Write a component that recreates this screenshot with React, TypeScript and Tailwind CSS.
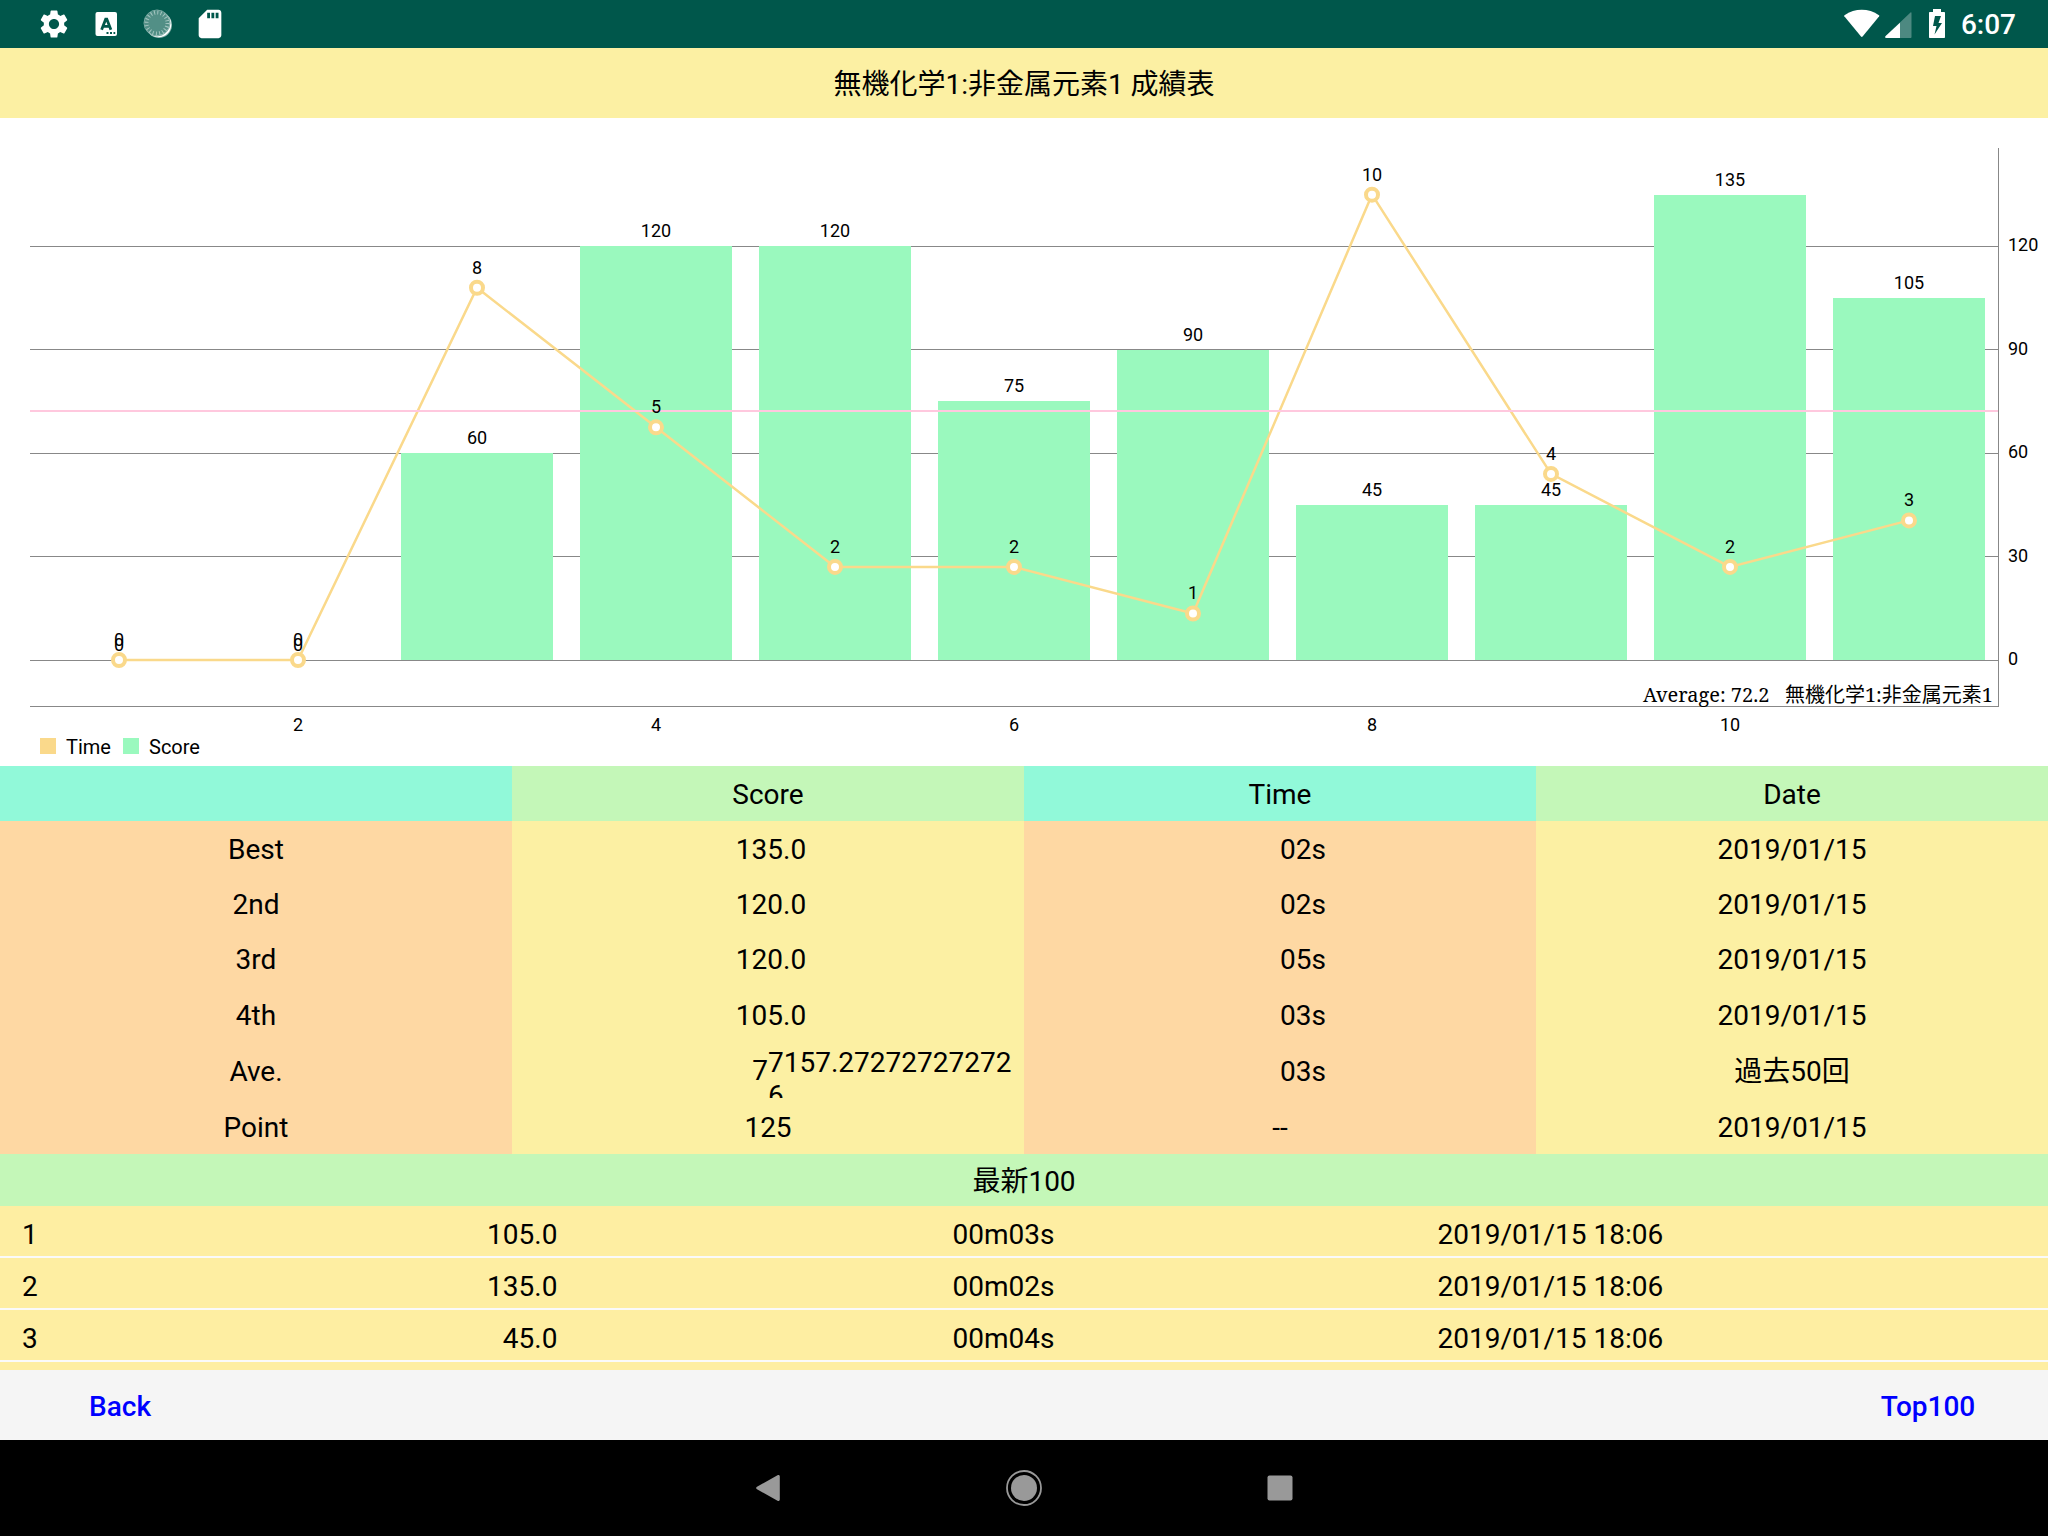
import { MdSdCard, MdSettings } from "react-icons/md";

const attempts = [
  { score: 0, time: 0 },
  { score: 0, time: 0 },
  { score: 60, time: 8 },
  { score: 120, time: 5 },
  { score: 120, time: 2 },
  { score: 75, time: 2 },
  { score: 90, time: 1 },
  { score: 45, time: 10 },
  { score: 45, time: 4 },
  { score: 135, time: 2 },
  { score: 105, time: 3 },
];

const ranking = [
  { label: "Best", score: "135.0", time: "02s", date: "2019/01/15", height: "h-[55px]" },
  { label: "2nd", score: "120.0", time: "02s", date: "2019/01/15", height: "h-[55px]" },
  { label: "3rd", score: "120.0", time: "05s", date: "2019/01/15", height: "h-[55px]" },
  { label: "4th", score: "105.0", time: "03s", date: "2019/01/15", height: "h-14" },
];

const latest = [
  { rank: 1, score: "105.0", time: "00m03s", date: "2019/01/15 18:06" },
  { rank: 2, score: "135.0", time: "00m02s", date: "2019/01/15 18:06" },
  { rank: 3, score: "45.0", time: "00m04s", date: "2019/01/15 18:06" },
];

function StatusBar() {
  return (
    <div className="flex h-12 shrink-0 items-center justify-between bg-[#00574b] pr-8 pl-9 text-white">
      <div className="flex items-center gap-4">
        <span className="flex w-9 justify-center">
          <MdSettings size={34} />
        </span>
        <svg width="36" height="36" viewBox="0 0 36 36" fill="none">
          <rect x="7.500" y="6" width="21.500" height="24" rx="2" fill="#fff" />
          <path d="M13.600 23.800 17.700 13.200h1.100L22.900 23.800M15 20.400h6.500" stroke="#00574b" strokeWidth="2.800" />
          <path d="M18.500 26h2v2h-2zM22 26h2v2h-2zM25.500 26h1.700v2h-1.700z" fill="#00574b" />
        </svg>
        <svg width="36" height="36" viewBox="0 0 36 36" fill="none">
          <circle cx="19" cy="19" r="13" fill="#fff" fillOpacity="0.5" />
          <circle cx="18.500" cy="18.500" r="12.800" fill="#fff" />
          <circle cx="17" cy="17" r="12.500" fill="#528f86" />
          <circle cx="17" cy="17" r="13" fill="none" stroke="#7aaaa3" strokeWidth="1" />
          <circle cx="17" cy="17" r="10.500" stroke="#a5c6c1" strokeWidth="4" strokeDasharray="1 2.300" />
        </svg>
        <span className="flex w-9 justify-center">
          <MdSdCard size={34} />
        </span>
      </div>
      <div className="flex items-center">
        <svg width="102" height="32" viewBox="0 0 102 32" fill="#fff">
          <path d="M0.500 7.200C11 0 24.500 0 35 7.200c.4.300.5.700.2 1.100L18.600 28.500c-.5.600-1.100.6-1.600 0L.3 8.300C0 7.900.1 7.500.5 7.200z" />
          <path d="M66.500 4.500C67 4 67.500 4.200 67.500 5v24c0 .6-.4 1-1 1H42.500c-1.500 0-1.800-1-.8-2z" fillOpacity="0.3" />
          <path d="M56 14.800V30H42.500c-1.500 0-1.800-1-.8-2z" />
          <path
            fillRule="evenodd"
            d="M89 1h8v3h3c.6 0 1 .4 1 1v24c0 .6-.4 1-1 1H86c-.6 0-1-.4-1-1V5c0-.6.4-1 1-1h3zM91 8 89 18h3.500L90.500 26.500 98 15h-3.500L97 8z"
          />
        </svg>
        <span className="ml-[15px] pt-px text-[28px] leading-8 font-medium">6:07</span>
      </div>
    </div>
  );
}

const LEFT = 30;
const RIGHT = 1998;
const BASE = 542;
const step = 179;
const xAt = (n: number) => LEFT + (n - 0.5) * step - 0.5;
const scoreY = (score: number) => BASE - score * 3.447;
const timeY = (time: number) => BASE - time * 46.53;
const average = 72.2;

function ScoreChart() {
  return (
    <svg viewBox="0 0 2048 648" className="block h-auto w-full shrink-0 bg-white" role="img" aria-label="Time and Score">
      <g stroke="#888" strokeWidth="1" shapeRendering="crispEdges">
        {[0, 30, 60, 90, 120].map((v) => (
          <line key={v} x1={LEFT} x2={RIGHT} y1={Math.floor(scoreY(v)) + 0.5} y2={Math.floor(scoreY(v)) + 0.5} />
        ))}
        <line x1={LEFT} x2={RIGHT + 1} y1="588.5" y2="588.5" />
        <line x1="1998.5" x2="1998.5" y1="30" y2="589" />
      </g>
      <g fill="#9af9be" shapeRendering="crispEdges">
        {attempts.map((a, i) => (
          <rect
            key={i}
            x={Math.round(xAt(i + 1) - step * 0.425)}
            width={Math.round(step * 0.85)}
            y={Math.round(scoreY(a.score))}
            height={BASE - Math.round(scoreY(a.score))}
          />
        ))}
      </g>
      <polyline
        points={attempts.map((a, i) => `${xAt(i + 1)},${timeY(a.time)}`).join(" ")}
        fill="none"
        stroke="#fad98b"
        strokeWidth="2.500"
      />
      <g fill="#fff" stroke="#fad98b" strokeWidth="4">
        {attempts.map((a, i) => (
          <circle key={i} cx={xAt(i + 1)} cy={timeY(a.time)} r="6" />
        ))}
      </g>
      <line
        x1={LEFT}
        x2={RIGHT}
        y1={Math.round(scoreY(average))}
        y2={Math.round(scoreY(average))}
        stroke="#ffc8de"
        strokeWidth="2"
        shapeRendering="crispEdges"
      />
      <g className="text-[18px]" textAnchor="middle">
        {attempts.map((a, i) => (
          <g key={i}>
            <text x={xAt(i + 1)} y={Math.round(timeY(a.time)) - 14}>{a.time}</text>
            <text x={xAt(i + 1)} y={Math.round(scoreY(a.score)) - 9}>{a.score}</text>
          </g>
        ))}
        {[2, 4, 6, 8, 10].map((n) => (
          <text key={n} x={xAt(n)} y="613">{n}</text>
        ))}
      </g>
      <g className="text-[18px]">
        {[0, 30, 60, 90, 120].map((v) => (
          <text key={v} x="2008" y={Math.round(scoreY(v)) + 5}>{v}</text>
        ))}
      </g>
      <g className="font-['Noto_Serif','Liberation_Serif','Noto_Sans_CJK_JP',serif] text-[20px]">
        <text x="1643" y="584">Average: {average}</text>
        <text x="1993" y="584" textAnchor="end">無機化学1:非金属元素1</text>
      </g>
      <g className="text-[20px]">
        <rect x="40" y="620" width="16" height="16" fill="#fad98b" />
        <text x="66" y="636">Time</text>
        <rect x="123" y="620" width="16" height="16" fill="#9af9be" />
        <text x="149" y="636">Score</text>
      </g>
    </svg>
  );
}

function RankingTable() {
  return (
    <table className="w-full shrink-0 table-fixed border-collapse text-center">
      <thead>
        <tr className="h-[55px]">
          <th className="bg-[#91f9d9] p-0" aria-label="Rank" />
          <th className="bg-[#c4f7b8] p-0 pt-0.5 font-normal">Score</th>
          <th className="bg-[#91f9d9] p-0 pt-0.5 font-normal">Time</th>
          <th className="bg-[#c4f7b8] p-0 pt-0.5 font-normal">Date</th>
        </tr>
      </thead>
      <tbody>
        {ranking.map((r) => (
          <tr key={r.label} className={r.height}>
            <th scope="row" className="bg-[#fed8a3] p-0 pt-0.5 font-normal">{r.label}</th>
            <td className="bg-[#fcf0a3] p-0 pt-0.5 pl-1.5">{r.score}</td>
            <td className="bg-[#fed8a3] p-0 pt-0.5 pl-[12.5%] text-left">{r.time}</td>
            <td className="bg-[#fcf0a3] p-0 pt-0.5">{r.date}</td>
          </tr>
        ))}
        <tr className="h-14">
          <th scope="row" className="bg-[#fed8a3] p-0 pt-0.5 font-normal">Ave.</th>
          <td className="bg-[#fcf0a3] p-0">
            <div className="grid h-14 grid-cols-2 overflow-hidden">
              <span className="pt-3 text-right">7</span>
              <span className="pt-1 text-left break-all">7157.272727272726</span>
            </div>
          </td>
          <td className="bg-[#fed8a3] p-0 pt-0.5 pl-[12.5%] text-left">03s</td>
          <td className="bg-[#fcf0a3] p-0 pt-0.5">過去50回</td>
        </tr>
        <tr className="h-14">
          <th scope="row" className="bg-[#fed8a3] p-0 pt-0.5 font-normal">Point</th>
          <td className="bg-[#fcf0a3] p-0 pt-0.5">125</td>
          <td className="bg-[#fed8a3] p-0 pt-0.5">--</td>
          <td className="bg-[#fcf0a3] p-0 pt-0.5">2019/01/15</td>
        </tr>
      </tbody>
    </table>
  );
}

function LatestList() {
  return (
    <div className="min-h-0 flex-1 overflow-hidden bg-[#feeea2]">
      <table className="w-full table-fixed border-separate border-spacing-0">
        <colgroup>
          <col className="w-[12%]" />
          <col className="w-[16%]" />
          <col className="w-[42%]" />
          <col className="w-[30%]" />
        </colgroup>
        <tbody>
          {latest.map((r) => (
            <tr key={r.rank} className="h-[52px]">
              <td className="border-b-2 border-[#fafafa] p-0 pt-1.5 pl-[22px]">{r.rank}</td>
              <td className="border-b-2 border-[#fafafa] p-0 pt-1.5 pr-4 text-right">{r.score}</td>
              <td className="border-b-2 border-[#fafafa] p-0 pt-1.5 text-center">{r.time}</td>
              <td className="border-b-2 border-[#fafafa] p-0 pt-1.5 pl-1">{r.date}</td>
            </tr>
          ))}
        </tbody>
      </table>
    </div>
  );
}

function NavigationBar() {
  return (
    <nav className="flex h-24 shrink-0 justify-center bg-black">
      <button type="button" aria-label="Back" className="flex w-64 items-center justify-center">
        <svg width="36" height="36" viewBox="0 0 36 36">
          <path d="M7 16.800 27.500 5.200c1.200-.7 2.300-.1 2.300 1.200v23.200c0 1.300-1.100 1.900-2.300 1.200L7 19.200c-1.100-.7-1.100-1.700 0-2.400z" fill="#999" />
        </svg>
      </button>
      <button type="button" aria-label="Home" className="flex w-64 items-center justify-center">
        <svg width="36" height="36" viewBox="0 0 36 36">
          <circle cx="18" cy="18" r="17" fill="none" stroke="#999" strokeWidth="1.800" />
          <circle cx="18" cy="18" r="13" fill="#999" />
        </svg>
      </button>
      <button type="button" aria-label="Overview" className="flex w-64 items-center justify-center">
        <svg width="36" height="36" viewBox="0 0 36 36">
          <rect x="5.500" y="5.500" width="25" height="25" rx="2" fill="#999" />
        </svg>
      </button>
    </nav>
  );
}

export default function App() {
  return (
    <div
      lang="ja"
      className="flex h-screen flex-col overflow-hidden bg-white font-[Roboto,'Noto_Sans_CJK_JP',sans-serif] text-[28px] leading-[33px] text-black"
    >
      <StatusBar />
      <h1 className="flex h-[70px] shrink-0 items-center justify-center bg-[#fcf0a3] pt-0.5">
        無機化学1:非金属元素1 成績表
      </h1>
      <ScoreChart />
      <RankingTable />
      <h2 className="flex h-[52px] shrink-0 items-center justify-center bg-[#c4f7b8] pt-0.5">最新100</h2>
      <LatestList />
      <div className="flex h-[70px] shrink-0 items-stretch justify-between bg-[#f5f5f5] font-medium text-[#0000ff]">
        <button type="button" className="w-60 pt-0.5">Back</button>
        <button type="button" className="w-60 pt-0.5">Top100</button>
      </div>
      <NavigationBar />
    </div>
  );
}
